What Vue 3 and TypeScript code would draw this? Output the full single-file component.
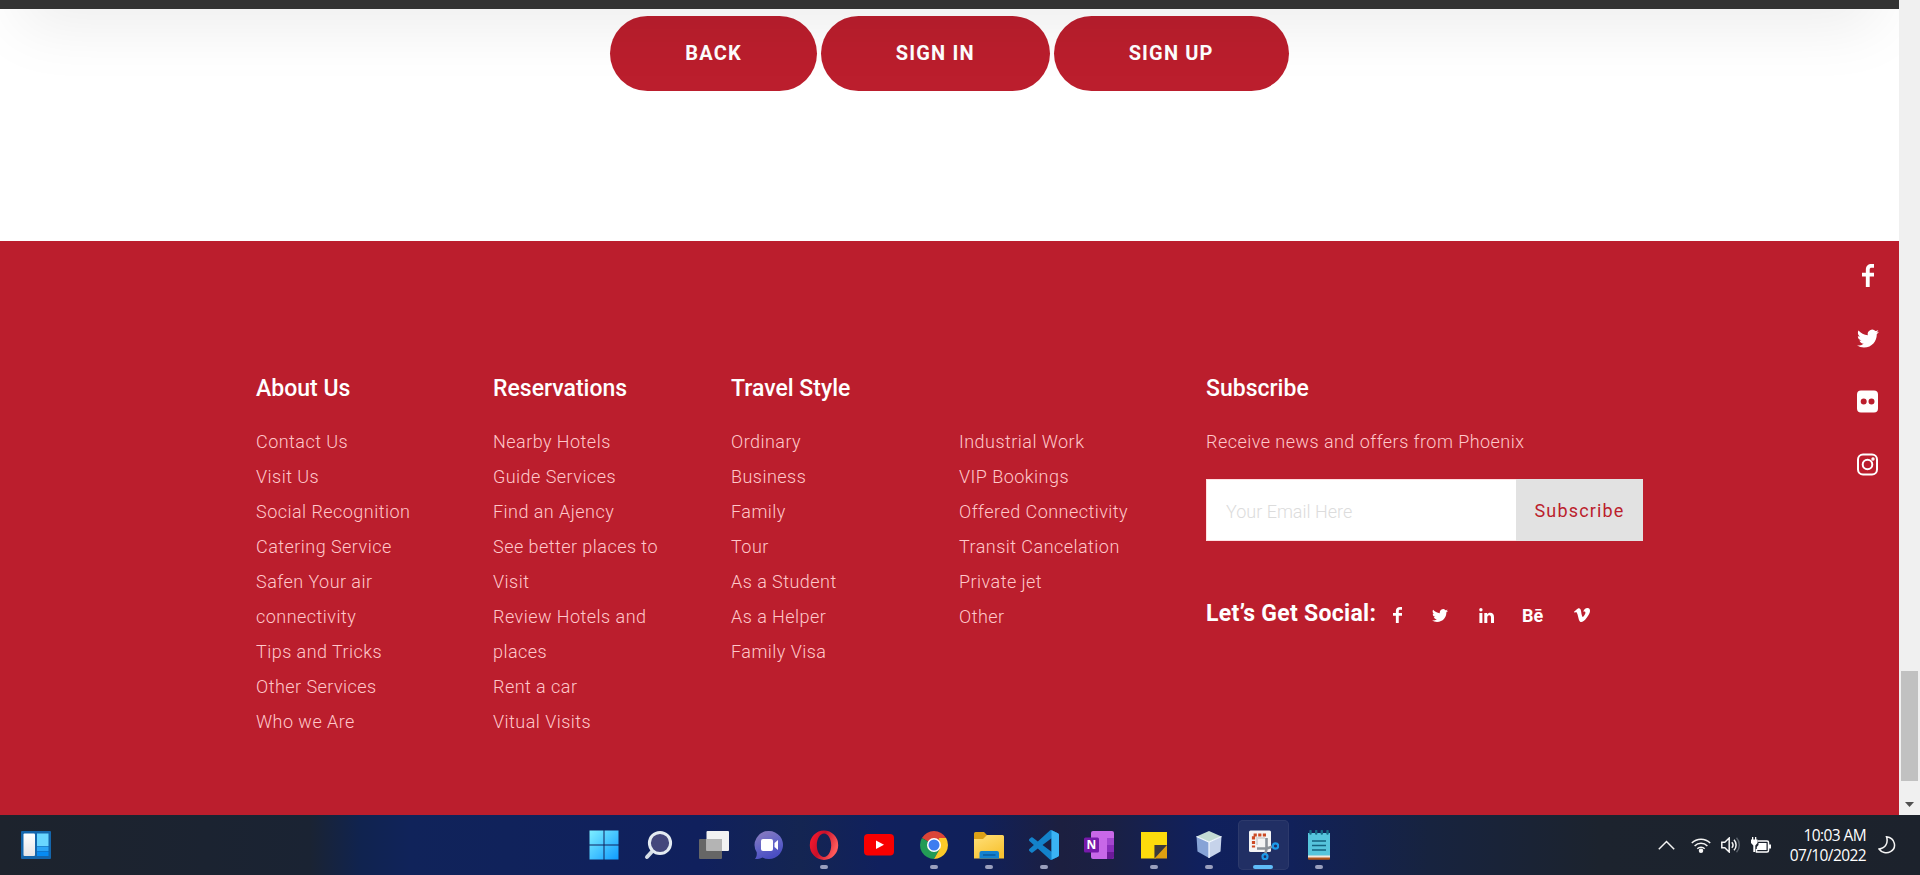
<script setup lang="ts">
interface LinkColumn {
  title: string
  links: string[]
}

const actions: string[] = ['BACK', 'SIGN IN', 'SIGN UP']

const columns: LinkColumn[] = [
  {
    title: 'About Us',
    links: [
      'Contact Us',
      'Visit Us',
      'Social Recognition',
      'Catering Service',
      'Safen Your air connectivity',
      'Tips and Tricks',
      'Other Services',
      'Who we Are',
    ],
  },
  {
    title: 'Reservations',
    links: [
      'Nearby Hotels',
      'Guide Services',
      'Find an Ajency',
      'See better places to Visit',
      'Review Hotels and places',
      'Rent a car',
      'Vitual Visits',
    ],
  },
  {
    title: 'Travel Style',
    links: ['Ordinary', 'Business', 'Family', 'Tour', 'As a Student', 'As a Helper', 'Family Visa'],
  },
  {
    title: '',
    links: [
      'Industrial Work',
      'VIP Bookings',
      'Offered Connectivity',
      'Transit Cancelation',
      'Private jet',
      'Other',
    ],
  },
]

const twitter =
  'M23.953 4.57a10 10 0 01-2.825.775 4.958 4.958 0 002.163-2.723c-.951.555-2.005.959-3.127 1.184a4.92 4.92 0 00-8.384 4.482C7.69 8.095 4.067 6.13 1.64 3.162a4.822 4.822 0 00-.666 2.475c0 1.71.87 3.213 2.188 4.096a4.904 4.904 0 01-2.228-.616v.06a4.923 4.923 0 003.946 4.827 4.996 4.996 0 01-2.212.085 4.936 4.936 0 004.604 3.417 9.867 9.867 0 01-6.102 2.105c-.39 0-.779-.023-1.17-.067a13.995 13.995 0 007.557 2.209c9.053 0 13.998-7.496 13.998-13.985 0-.21 0-.42-.015-.63A9.935 9.935 0 0024 4.59z'
const facebook = 'M4 24V13H0V9h4V6c0-4 2.4-6 6-6h2.5v4H10C8.700 4 8 4.700 8 6v3h4.500v4H8v11z'
</script>

<template>
  <div class="screen">
    <div class="viewport">
      <main class="page">
        <header class="header"></header>
        <section class="actions">
          <button v-for="a in actions" :key="a" class="pill">{{ a }}</button>
        </section>

        <footer class="footer">
          <div v-for="(col, i) in columns" :key="i" class="col" :class="'col-' + i">
            <h3>{{ col.title }}</h3>
            <ul>
              <li v-for="l in col.links" :key="l">{{ l }}</li>
            </ul>
          </div>
          <div class="subscribe">
            <h3>Subscribe</h3>
            <p>Receive news and offers from Phoenix</p>
            <form class="form" @submit.prevent>
              <input type="text" placeholder="Your Email Here" />
              <button>Subscribe</button>
            </form>
            <div class="social">
              <h4>Let’s Get Social:</h4>
              <svg class="s-fb" viewBox="0 0 12.5 24" preserveAspectRatio="none"><path :d="facebook" /></svg>
              <svg class="s-tw" viewBox="0 2 24 19.8" preserveAspectRatio="none"><path :d="twitter" /></svg>
              <svg class="s-in" viewBox="0 0 15 15">
                <circle cx="1.900" cy="1.700" r="1.700" />
                <path d="M.4 5h3v10h-3zM5.300 5h2.900v1.400C8.800 5.400 9.800 4.800 11.200 4.800c2.700 0 3.800 1.700 3.800 4.400V15h-3V9.800c0-1.500-.4-2.500-1.700-2.500S8.300 8.300 8.300 9.800V15h-3z" />
              </svg>
              <span class="s-be">Bē</span>
              <svg class="s-vi" viewBox="0 1.600 24 20.800" preserveAspectRatio="none">
                <path d="M23.976 6.417c-.105 2.338-1.739 5.543-4.894 9.609-3.268 4.247-6.026 6.370-8.290 6.370-1.409 0-2.578-1.294-3.553-3.881L5.321 11.401c-.719-2.584-1.488-3.878-2.312-3.878-.179 0-.806.378-1.881 1.132L0 7.198a315 315 0 003.501-3.128C5.080 2.702 6.266 1.985 7.055 1.911c1.867-.18 3.016 1.100 3.447 3.838.465 2.953.789 4.789.971 5.507.539 2.450 1.131 3.674 1.776 3.674.502 0 1.256-.796 2.265-2.385 1.004-1.589 1.540-2.797 1.612-3.628.144-1.371-.395-2.061-1.614-2.061-.574 0-1.167.121-1.777.391 1.186-3.868 3.434-5.757 6.762-5.637 2.473.06 3.628 1.664 3.493 4.797z" />
              </svg>
            </div>
          </div>
        </footer>

        <aside class="rail">
          <svg width="12" height="23" viewBox="0 0 12.5 24" preserveAspectRatio="none"><path :d="facebook" /></svg>
          <svg width="22" height="18" viewBox="0 2 24 19.8"><path :d="twitter" /></svg>
          <svg width="21" height="22" viewBox="0 0 21 22">
            <path fill-rule="evenodd" d="M4 0h13a4 4 0 014 4v14a4 4 0 01-4 4H4a4 4 0 01-4-4V4a4 4 0 014-4zM6.700 8a3 3 0 100 6 3 3 0 000-6zm7.800 0a3 3 0 100 6 3 3 0 000-6z" />
          </svg>
          <svg width="21" height="22" viewBox="0 0 21 22" class="line">
            <rect x="1" y="1" width="19" height="20" rx="5" />
            <circle cx="10.500" cy="11" r="4.800" />
            <circle cx="16" cy="5.500" r=".7" />
          </svg>
        </aside>
      </main>

      <div class="scrollbar">
        <div class="thumb"></div>
        <svg width="9" height="5" viewBox="0 0 9 5"><path d="M0 0h9L4.500 5z" fill="#505050" /></svg>
      </div>
    </div>

    <div class="taskbar">
      <svg class="widgets" width="30" height="28" viewBox="0 0 30 28">
        <defs>
          <linearGradient id="wg" x2="0" y2="1"><stop stop-color="#fff" /><stop offset="1" stop-color="#e4e4e6" /></linearGradient>
        </defs>
        <rect width="30" height="28" rx="1" fill="#1466ac" />
        <rect x="2.500" y="2.500" width="11.500" height="22.500" rx="1" fill="url(#wg)" />
        <path d="M16 2.500h11.500V15H16z" fill="#6ad6ff" />
        <path d="M16 15.500h11.500v4.500H16z" fill="#2ba4f5" />
        <path d="M16 20.500h11.500V25H16z" fill="#078bf2" />
      </svg>

      <div class="apps">
        <div class="app">
          <svg viewBox="0 0 30 30">
            <defs>
              <linearGradient id="win" x2="1" y2="1"><stop stop-color="#7eefff" /><stop offset="1" stop-color="#0f9bff" /></linearGradient>
            </defs>
            <path d="M.5.5h14v14H.5zM15.500.5h14v14h-14zM.5 15.500h14v14H.5zM15.500 15.500h14v14h-14z" fill="url(#win)" />
          </svg>
        </div>
        <div class="app">
          <svg viewBox="0 0 30 30">
            <path d="M8.500 21L3 27" stroke="#d5dde6" stroke-width="4" stroke-linecap="round" />
            <circle cx="16" cy="13" r="10.600" fill="#44477c" stroke="#e4ebf2" stroke-width="3" />
          </svg>
        </div>
        <div class="app">
          <svg viewBox="0 0 30 30">
            <rect y="9" width="23" height="20" rx="1" fill="#666" />
            <rect x="7.500" y="1" width="22.500" height="20" rx="1" fill="#f2f2f2" />
            <path d="M7.500 9H23v12H7.500z" fill="#b4b4b4" />
          </svg>
        </div>
        <div class="app">
          <svg viewBox="0 0 30 30">
            <defs>
              <linearGradient id="chat" x2="0.400" y2="1"><stop stop-color="#8e7fbd" /><stop offset=".6" stop-color="#6264c7" /><stop offset="1" stop-color="#4a4ec2" /></linearGradient>
            </defs>
            <path d="M15 1a14 14 0 11-6.500 26.400C6 28.700 3 29.200 1 29c1.600-1.800 2-4 1.700-6.700A14 14 0 0115 1z" fill="url(#chat)" />
            <rect x="7" y="9" width="12" height="12" rx="2" fill="#fff" />
            <path d="M20.500 13l3.500-3v10l-3.500-3z" fill="#fff" />
          </svg>
        </div>
        <div class="app on">
          <svg viewBox="0 0 30 30">
            <defs>
              <linearGradient id="op" x2="1" y2=".4"><stop stop-color="#ff1b2d" /><stop offset=".5" stop-color="#c8102a" /><stop offset="1" stop-color="#ff5a5a" /></linearGradient>
            </defs>
            <path fill-rule="evenodd" fill="url(#op)" d="M15 .5a14.200 14.700 0 110 29.400 14.200 14.700 0 010-29.400zm0 3C11 3.500 7.800 9 7.800 15.200S11 26.900 15 26.900s7.200-5.500 7.200-11.700S19 3.500 15 3.500z" />
          </svg>
        </div>
        <div class="app">
          <svg viewBox="0 0 30 30">
            <rect y="4" width="30" height="21.500" rx="4" fill="#f80000" />
            <path d="M12 10.500l8 4.300-8 4.300z" fill="#fff" />
          </svg>
        </div>
        <div class="app on">
          <svg viewBox="0 0 30 30">
            <path d="M15 15L2.900 8A14 14 0 0127.100 8z" fill="#db4437" />
            <path d="M2.900 8A14 14 0 0015 29l6-10.500-6-3.500z" fill="#239b56" />
            <path d="M27.100 8A14 14 0 0115 29l6-10.500L20 8z" fill="#fbc928" />
            <circle cx="15" cy="15" r="7" fill="#fff" />
            <circle cx="15" cy="15" r="5.500" fill="#3d7df0" />
          </svg>
        </div>
        <div class="app on">
          <svg viewBox="0 0 30 30">
            <defs>
              <linearGradient id="fold" x2=".6" y2="1"><stop stop-color="#ffe07a" /><stop offset="1" stop-color="#f8c332" /></linearGradient>
            </defs>
            <path d="M0 3.500A1.500 1.500 0 011.500 2H10l3 3v5H0z" fill="#dba016" />
            <path d="M0 9h9l4-4h15.500A1.500 1.500 0 0130 6.500V28.500H0z" fill="url(#fold)" />
            <path d="M5.500 28.500V23a2 2 0 012-2h15.500a2 2 0 012 2v5.500z" fill="#1581cf" />
            <path d="M9 25h12.500" stroke="#0a5191" stroke-width="1.200" />
          </svg>
        </div>
        <div class="app on">
          <svg viewBox="0 0 24 24">
            <path fill="#1382cb" d="M23.150 2.587L18.210.21a1.494 1.494 0 0 0-1.705.29l-9.460 8.630-4.120-3.128a.999.999 0 0 0-1.276.057L.327 7.261A1 1 0 0 0 .326 8.740L3.899 12 .326 15.260a1 1 0 0 0 .001 1.479L1.650 17.940a.999.999 0 0 0 1.276.057l4.120-3.128 9.460 8.630a1.492 1.492 0 0 0 1.704.29l4.942-2.377A1.500 1.500 0 0 0 24 20.060V3.939a1.500 1.500 0 0 0-.85-1.352zm-5.146 14.861L10.826 12l7.178-5.448v10.896z" />
            <path fill="#3ab3f5" d="M18 .2l5.150 2.387A1.500 1.500 0 0124 3.939V20.060a1.500 1.500 0 01-.85 1.352L18 23.800z" />
          </svg>
        </div>
        <div class="app">
          <svg viewBox="0 0 30 30">
            <rect x="7" y="1" width="23" height="28" rx="2" fill="#c868e8" />
            <path d="M23 8h7v7h-7z" fill="#a346cf" />
            <path d="M23 15h7v7h-7z" fill="#8a2dbb" />
            <path d="M23 22h7v5a2 2 0 01-2 2h-5z" fill="#6b1a98" />
            <rect y="7.500" width="15" height="15" rx="1.500" fill="#7719aa" />
            <text x="7.500" y="19.300" class="note">N</text>
          </svg>
        </div>
        <div class="app on">
          <svg viewBox="0 0 30 30">
            <path d="M2 2h26v15L16.500 28.500H2z" fill="#fddc0c" />
            <path d="M15.500 15H28v13.500H15.500z" fill="#e0a010" />
            <path d="M15.500 28.500V15H28z" fill="#3a3a3c" />
          </svg>
        </div>
        <div class="app on">
          <svg viewBox="0 0 30 30">
            <path d="M15 1l12.500 5.500L15 12 2.500 6.500z" fill="#c4dcd4" />
            <path d="M2.500 6.500L15 12v16L3.500 21.500z" fill="#86a3d6" />
            <path d="M27.500 6.500L15 12v16l11.500-6.500z" fill="#c6d3ea" />
            <path d="M2.500 6.500L15 12l12.500-5.500M15 12v16" fill="none" stroke="#f2f8ff" stroke-width="1.200" />
          </svg>
        </div>
        <div class="app on active">
          <svg viewBox="0 0 30 30">
            <rect x="0" y=".5" width="22" height="21.500" rx="1.500" fill="#f4f4f4" />
            <path d="M17 5H4.500v12.500" fill="none" stroke="#cc4a24" stroke-width="3.200" stroke-dasharray="3.200 1.400" />
            <path d="M8 15V8h8" fill="none" stroke="#d8d8d8" stroke-width="2" />
            <path d="M17.500 8v11l-1.200 5M8 18.500h10l5.500-2" fill="none" stroke="#8c9299" stroke-width="2.600" />
            <circle cx="26.500" cy="16" r="2.700" fill="none" stroke="#1d9ae8" stroke-width="2.200" />
            <circle cx="16" cy="26.700" r="2.500" fill="none" stroke="#1d9ae8" stroke-width="2.200" />
          </svg>
        </div>
        <div class="app on">
          <svg viewBox="0 0 30 30">
            <rect x="4" y="26" width="22" height="3.800" rx="1" fill="#b0561c" />
            <path d="M4 3h22v23.500H4z" fill="#56c5dc" />
            <path d="M4 25.500h22v2H4z" fill="#f2e7dc" />
            <path d="M8 11h14M8 15.500h14M8 20h14" stroke="#15637f" stroke-width="1.500" />
            <path d="M6.500 1v2.500M12.200 1v2.500M17.800 1v2.500M23.500 1v2.500" stroke="#176a85" stroke-width="2.400" stroke-linecap="round" />
          </svg>
        </div>
      </div>

      <div class="tray">
        <svg width="17" height="10" viewBox="0 0 17 10" class="ln"><path d="M.8 9.200l7.700-7.700 7.700 7.700" /></svg>
        <svg class="wifi ln" width="20" height="16" viewBox="0 0 20 16">
          <path d="M.8 6a13 13 0 0118.400 0M3.600 9a9 9 0 0112.800 0M6.300 11.700a5.200 5.200 0 017.400 0" />
          <circle cx="10" cy="13.700" r="1.500" fill="#fff" />
        </svg>
        <svg class="vol ln" width="20" height="16" viewBox="0 0 20 16">
          <path d="M.8 5.200h3L8.200 1v14l-4.400-4.200h-3zM10.800 5.200a4.200 4.200 0 010 5.600M13 2.800a7.500 7.500 0 010 10.400" />
          <path d="M15.500.8a10.600 10.600 0 010 14.400" stroke="#5a616b" />
        </svg>
        <svg class="bat" width="20" height="17" viewBox="0 0 20 17">
          <path d="M6.500 4H16a1.500 1.500 0 011.500 1.500v8A1.500 1.500 0 0116 15H5.500v-3" fill="none" stroke="#fff" stroke-width="1.500" />
          <path d="M7.500 6H15.500v7H5.800V10l1.700-2zM18 7.500h2v4h-2zM1 0h1.300v2.500h1.700V0h1.300v2.500H6.500V6L4.300 8.500V15H2.300V8.500L0 6V2.500h1z" fill="#fff" />
        </svg>
        <div class="clock"><span>10:03 AM</span><span>07/10/2022</span></div>
        <svg class="moon ln" width="18" height="18" viewBox="0 0 18 18">
          <path d="M8.500.8C10.500 7 7.500 11.800 1 13c2.500 3.600 7.500 5 11.500 2.700C19 12 17.500 2 8.500.8z" />
        </svg>
      </div>
    </div>
  </div>
</template>

<style>
body {
  overflow: hidden;
}
</style>

<style scoped>
.screen {
  width: 1920px;
  height: 875px;
  display: flex;
  flex-direction: column;
  overflow: hidden;
  font-family: Roboto, "Liberation Sans", sans-serif;
}
.viewport {
  height: 815px;
  display: flex;
}
.page {
  position: relative;
  width: 1899px;
  height: 815px;
  overflow: hidden;
  background: #fff;
}
.header {
  position: relative;
  z-index: 1;
  height: 109px;
  margin-top: -100px;
  background: #333;
  box-shadow: 0 36px 64px -20px rgba(0, 0, 0, 0.08);
}
.actions {
  height: 225px;
  padding-top: 7px;
  display: flex;
  justify-content: center;
  gap: 4px;
}
.pill {
  height: 75px;
  padding: 0 75px;
  border: 0;
  border-radius: 38px;
  background: #bb1e2d;
  color: #fff;
  font: 700 20px/75px Roboto, sans-serif;
  letter-spacing: 1.15px;
}
.footer {
  height: 574px;
  box-sizing: border-box;
  padding: 130px 0 0 256px;
  display: flex;
  background: #bb1e2d;
  color: #fff;
}
.col-0 { width: 237px; }
.col-1 { width: 238px; }
.col-2 { width: 228px; }
.col-3 { width: 247px; }
.col ul {
  width: 172px;
}
h3 {
  height: 35px;
  margin: 0 0 18px;
  font: 500 23px/35px Roboto, sans-serif;
}
ul {
  margin: 0;
  padding: 0;
  list-style: none;
}
li,
p {
  margin: 0;
  font-weight: 300;
  font-size: 18px;
  line-height: 35px;
  letter-spacing: 0.46px;
  color: #ffc8cb;
}
.form {
  display: flex;
  width: 437px;
  height: 62px;
  margin-top: 20px;
}
input {
  width: 310px;
  box-sizing: border-box;
  padding: 2px 19px 0;
  border: 1px solid #ffe0e2;
  border-right: 0;
  border-radius: 0;
  background: #fff;
  font: 300 18px Roboto, sans-serif;
}
input::placeholder {
  color: #dcdcdc;
}
.form button {
  width: 127px;
  padding: 0;
  border: 0;
  background: #e2e2e2;
  color: #bb1e2d;
  font: 400 18px Roboto, sans-serif;
  letter-spacing: 1.15px;
}
.social {
  display: flex;
  align-items: center;
  height: 30px;
  margin-top: 59px;
}
.social h4 {
  width: 187px;
  margin: -3px 0 0;
  font: 700 23px/30px Roboto, sans-serif;
  letter-spacing: 0.3px;
  white-space: nowrap;
}
.social svg,
.rail svg {
  fill: #fff;
}
.s-fb { width: 9px; height: 16px; }
.s-tw { width: 16px; height: 13px; margin-left: 30px; }
.s-in { width: 15px; height: 15px; margin-left: 31px; }
.s-be {
  width: 21px;
  margin: 1px 0 0 28px;
  font: 700 18px/20px Roboto, sans-serif;
}
.s-vi { width: 16px; height: 14px; margin-left: 31px; }
.rail {
  position: absolute;
  top: 244px;
  right: 20px;
  width: 23px;
  display: flex;
  flex-direction: column;
}
.rail svg {
  height: 63px;
  align-self: center;
}
.rail svg.line {
  fill: none;
  stroke: #fff;
  stroke-width: 2;
}
.rail svg:first-child {
  height: 23px;
  margin: 20px 0;
}
.scrollbar {
  width: 21px;
  display: flex;
  flex-direction: column;
  align-items: center;
  background: #f0f0f0;
}
.thumb {
  width: 17px;
  height: 110px;
  margin: 671px 0 21px;
  background: #c1c1c1;
}
.taskbar {
  position: relative;
  height: 60px;
  display: flex;
  background: linear-gradient(90deg, #1d232d 0, #1a2333 310px, #10234f 360px, #10235a 410px, #10205d 700px, #142552 800px, #10205d 880px, #10205a 980px, #1c1f40 1060px, #1a2044 1110px, #10205d 1200px, #11215a 1290px, #17233f 1430px, #1c232e 1600px, #1c222c 100%);
}
.widgets {
  margin: 16px 0 0 21px;
}
.apps {
  display: flex;
  margin-left: 525px;
}
.app {
  position: relative;
  width: 51px;
  height: 50px;
  margin: 5px 2px 0;
  border-radius: 5px;
}
.app svg {
  display: block;
  width: 30px;
  height: 30px;
  margin: 10px auto 0;
}
.app.on::after {
  content: "";
  position: absolute;
  left: 22px;
  bottom: 1px;
  width: 8px;
  height: 4px;
  border-radius: 2px;
  background: #9a9fbd;
}
.app.active {
  background: #212f64;
  box-shadow: inset 0 0 0 1px #2d3a6c;
}
.app.active::after {
  left: 15px;
  width: 20px;
  background: #5fbcf8;
}
.note {
  fill: #fff;
  font: 700 12px "Open Sans", sans-serif;
  text-anchor: middle;
}
.tray {
  display: flex;
  align-items: center;
  margin-left: auto;
  padding-right: 24px;
}
.ln {
  fill: none;
  stroke: #f4f4f4;
  stroke-width: 1.5;
}
.wifi { margin-left: 16px; }
.vol { margin-left: 10px; }
.bat { margin-left: 10px; }
.clock {
  width: 95px;
  display: flex;
  flex-direction: column;
  text-align: right;
  font: 15.5px/20px "Open Sans", "Noto Sans", sans-serif;
  letter-spacing: -0.6px;
  color: #fff;
}
.moon { margin-left: 12px; }
</style>
